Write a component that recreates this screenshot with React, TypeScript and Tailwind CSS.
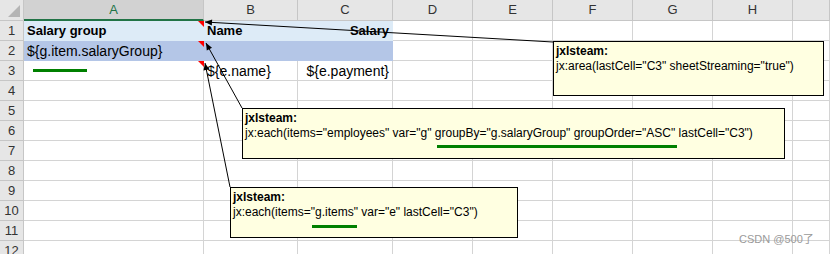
import React from "react";

const COLS = ["A", "B", "C", "D", "E", "F", "G", "H", ""];

type Cell = { text?: string; bold?: boolean; right?: boolean };

const ROW1_BG = "bg-[#ddebf7] border-[#ddebf7]";
const ROW2_BG = "bg-[#b4c6e7] border-[#b4c6e7]";

function arrowHead(x1: number, y1: number, x2: number, y2: number, len = 7, w = 3) {
  const dx = x2 - x1;
  const dy = y2 - y1;
  const d = Math.hypot(dx, dy);
  const ux = dx / d;
  const uy = dy / d;
  const bx = x2 - ux * len;
  const by = y2 - uy * len;
  const px = -uy * w;
  const py = ux * w;
  return `${x2},${y2} ${bx + px},${by + py} ${bx - px},${by - py}`;
}

function Comment({ className, body }: { className: string; body: string }) {
  return (
    <div
      className={`absolute border border-black bg-[#ffffe1] pl-[2px] pt-[2px] text-[12px] leading-[15px] text-black font-['Liberation_Sans',Arial,sans-serif] ${className}`}
    >
      <div className="font-bold">jxlsteam:</div>
      <div className="whitespace-nowrap">{body}</div>
    </div>
  );
}

export default function App() {
  const rows: Cell[][] = [
    [{ text: "Salary group", bold: true }, { text: "Name", bold: true }, { text: "Salary", bold: true, right: true }],
    [{ text: "${g.item.salaryGroup}" }, {}, {}],
    [{}, { text: "${e.name}" }, { text: "${e.payment}", right: true }],
  ];

  const arrows = [
    { x1: 553, y1: 42, x2: 205, y2: 22 },
    { x1: 242, y1: 108, x2: 206, y2: 43 },
    { x1: 230, y1: 187, x2: 205, y2: 63 },
  ];

  return (
    <div className="relative w-[830px] h-[254px] overflow-hidden bg-white font-['Liberation_Sans',Arial,sans-serif]">
      <div className="grid grid-cols-[24px_180px_94px_95px_80px_80px_80px_80px_80px_37px] grid-rows-[21px_repeat(12,20px)]">
        {/* corner */}
        <div className="relative bg-[#e6e6e6] border-r border-b border-[#c6c6c6]">
          <div className="absolute right-[3px] bottom-[3px] w-0 h-0 border-l-[12px] border-l-transparent border-b-[12px] border-b-[#b5b5b5]" />
        </div>
        {COLS.map((c, i) =>
          i === 0 ? (
            <div
              key={c}
              className="flex items-center justify-center bg-[#d2d2d2] border-r border-[#c6c6c6] border-b-2 border-b-[#217346] text-[13px] text-[#217346]"
            >
              {c}
            </div>
          ) : (
            <div
              key={i}
              className="flex items-center justify-center bg-[#e6e6e6] border-r border-b border-[#c6c6c6] text-[13px] text-[#333]"
            >
              {c}
            </div>
          )
        )}
        {Array.from({ length: 12 }).map((_, r) => (
          <React.Fragment key={r}>
            <div className="flex items-center justify-center bg-[#e6e6e6] border-r border-b border-[#c6c6c6] text-[13px] text-[#333]">
              {r + 1}
            </div>
            {COLS.map((_, c) => {
              const data = r < 3 && c < 3 ? rows[r][c] : undefined;
              const fill = r === 0 && c < 3 ? ROW1_BG : r === 1 && c < 3 ? ROW2_BG : "border-[#d4d4d4]";
              return (
                <div
                  key={c}
                  className={`flex items-center border-r border-b px-[3px] pt-[1px] whitespace-nowrap text-black ${fill} ${
                    data?.right ? "justify-end" : "justify-start"
                  } ${data?.bold ? "font-bold text-[13px]" : "text-[14px]"}`}
                >
                  {data?.text}
                </div>
              );
            })}
          </React.Fragment>
        ))}
      </div>

      {/* comment indicators + arrows */}
      <svg className="absolute left-0 top-0" width={830} height={254}>
        <polygon points="198,21 204,21 204,27" fill="#ff0000" />
        <polygon points="198,41 204,41 204,47" fill="#ff0000" />
        <polygon points="198,61 204,61 204,67" fill="#ff0000" />
        {arrows.map((a, i) => (
          <g key={i}>
            <line x1={a.x1} y1={a.y1} x2={a.x2} y2={a.y2} stroke="#000" strokeWidth={1} />
            <polygon points={arrowHead(a.x1, a.y1, a.x2, a.y2)} fill="#000" />
          </g>
        ))}
      </svg>

      <Comment className="left-[553px] top-[41px] w-[271px] h-[55px]" body={'jx:area(lastCell="C3" sheetStreaming="true")'} />
      <Comment
        className="left-[242px] top-[108px] w-[543px] h-[51px]"
        body={'jx:each(items="employees" var="g" groupBy="g.salaryGroup" groupOrder="ASC" lastCell="C3")'}
      />
      <Comment className="left-[230px] top-[187px] w-[288px] h-[51px]" body={'jx:each(items="g.items" var="e" lastCell="C3")'} />

      {/* green annotation underlines */}
      <div className="absolute left-[33px] top-[69px] w-[54px] h-[3px] bg-[#008000]" />
      <div className="absolute left-[437px] top-[145px] w-[240px] h-[3px] bg-[#008000]" />
      <div className="absolute left-[312px] top-[225px] w-[45px] h-[3px] bg-[#008000]" />

      <div className="absolute left-[739px] top-[232px] text-[11px] leading-[14px] text-[#9a9a9a] font-['Liberation_Sans','Noto_Sans_CJK_SC',sans-serif]">
        CSDN @500了
      </div>
    </div>
  );
}
